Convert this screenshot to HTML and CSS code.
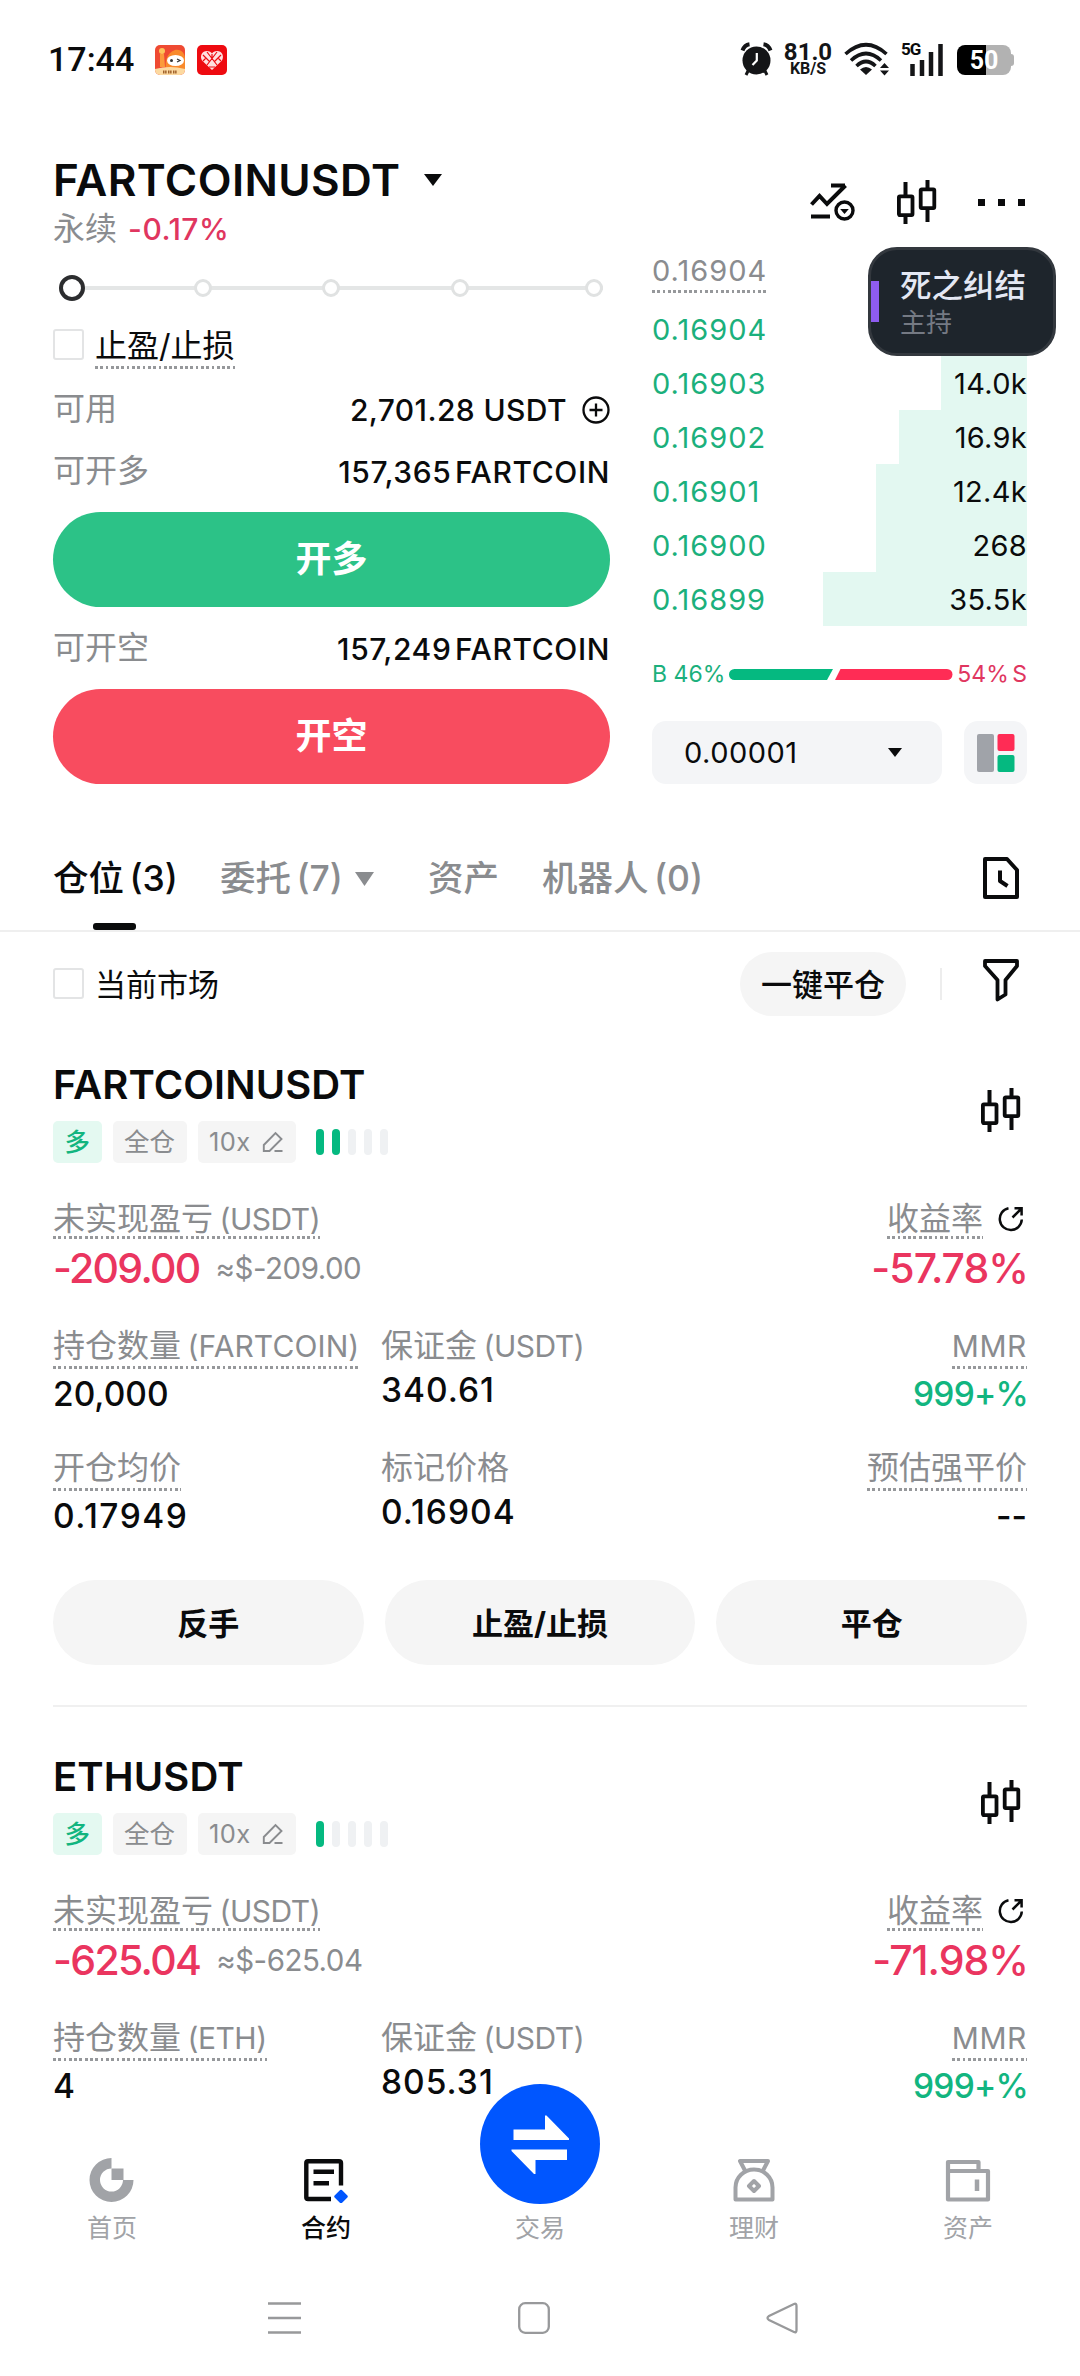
FILE: index.html
```html
<!DOCTYPE html>
<html lang="zh-CN">
<head>
<meta charset="utf-8">
<title>FARTCOINUSDT</title>
<link rel="stylesheet" href="styles.css">
</head>
<body>
<svg width="0" height="0" class="defs">
  <defs>
    <symbol id="candles" viewBox="0 0 40 44">
      <g fill="none" stroke="#0a0b0c">
        <path stroke-width="4" d="M8.500 2V15M8.500 36V44M30.500 0V9M30.500 29V42"/>
        <rect stroke-width="3.800" x="1.900" y="16.300" width="13.600" height="18.800" rx="1"/>
        <rect stroke-width="3.800" x="23.700" y="9.300" width="13.600" height="18.800" rx="1"/>
      </g>
    </symbol>
    <symbol id="share" viewBox="0 0 26 26">
      <path d="M10.500 2.200A11 11 0 1 0 23.800 13.500M14.500 11.500L23 3M16.500 2.300H23.600V9.500" fill="none" stroke="#0a0b0c" stroke-width="2.500"/>
    </symbol>
    <symbol id="edit" viewBox="0 0 22 22">
      <path d="M1.800 20V14L13.500 2L19.500 8L7.500 20ZM12.500 20H20.500" fill="none" stroke="#8a8c8f" stroke-width="1.900"/>
    </symbol>
  </defs>
</svg>

<div class="screen">
  <header class="status">
    <span class="clock">17:44</span>
    <svg class="app-a" width="30" height="30" viewBox="0 0 30 30">
      <rect width="30" height="30" rx="5" fill="#ef4a32"/>
      <path d="M12 30C9 18 11 8 20 5C27 4 30 9 30 14V25H12Z" fill="#f98a2c"/>
      <circle cx="7" cy="6" r="3" fill="#fdc45a"/><path d="M5 9H9L10 22H5Z" fill="#fb9a3a"/>
      <path d="M0 24Q15 20 30 24V25A5 5 0 0 1 25 30H5A5 5 0 0 1 0 25Z" fill="#fcd9a0"/>
      <ellipse cx="20.500" cy="15.500" rx="8.500" ry="5.500" fill="#fff"/>
      <circle cx="16.500" cy="15.500" r="1.500" fill="#333"/><path d="M22 14L25 15.500L22 17" fill="none" stroke="#333" stroke-width="1.200"/>
      <path d="M8 27H12M13 27H17M18 27H22" stroke="#a0622c" stroke-width="3" stroke-dasharray="1.500 .600"/>
    </svg>
    <svg class="app-b" width="30" height="30" viewBox="0 0 30 30">
      <rect width="30" height="30" rx="5" fill="#ee0a10"/>
      <path d="M15 25L5 15.500C2.500 11 5 6 10 6C12.500 6 14 7 15 8.500C16 7 17.500 6 20 6C25 6 27.500 11 25 15.500Z" fill="#ffdfe0"/>
      <path d="M6 10L13 17M10 7L20 20M24 10L17 17M20 7L10 20M15 9V13M9 13L6 16M21 13L24 16M12 22H18" stroke="#ee0a10" stroke-width="1.200"/>
    </svg>
    <svg class="alarm" width="33" height="34" viewBox="0 0 33 34">
      <circle cx="16.500" cy="18.500" r="14" fill="#141517"/>
      <path d="M2.500 8.500Q4.500 3 9.500 2.300M30.500 8.500Q28.500 3 23.500 2.300" fill="none" stroke="#141517" stroke-width="4"/>
      <path d="M8 29L6 33M25 29L27 33" stroke="#141517" stroke-width="3"/>
      <path d="M16.800 11V18.500L12.500 23" fill="none" stroke="#fff" stroke-width="2.200"/>
    </svg>
    <div class="speed"><b>81.0</b><i>KB/S</i></div>
    <svg class="wifi" width="46" height="34" viewBox="0 0 46 34">
      <g fill="none" stroke="#141517" stroke-width="3.600">
        <path d="M1.500 12Q22 -6.500 42.500 12"/><path d="M7 18.500Q22 4.500 37 18.500"/><path d="M12.500 24Q22 15 31.500 24"/>
      </g>
      <path d="M16 27.500Q22 22.500 28 27.500L22 33Z" fill="#141517"/>
      <path d="M36 26L40.500 21L45 26ZM36 28.500H45L40.500 33.500Z" fill="#141517"/>
    </svg>
    <div class="signal"><span>5G</span>
      <svg width="35" height="34" viewBox="0 0 35 34"><path d="M3.500 22V34M13 18V34M22 10V34M31.500 2V34" stroke="#141517" stroke-width="4.500"/></svg>
    </div>
    <div class="battery"><span>50</span></div>
  </header>

  <section class="pair">
    <div>
      <h1>FARTCOINUSDT<svg width="18" height="12" viewBox="0 0 18 12"><path d="M0 0H18L9 12Z" fill="#0a0b0c"/></svg></h1>
      <p><span>永续</span><b>-0.17%</b></p>
    </div>
    <div class="tools">
      <svg width="46" height="38" viewBox="0 0 46 38">
        <path d="M1.500 21.500L9.500 13L17 21L35.500 2.500M21 2.500H35M1 33.500H20" fill="none" stroke="#0a0b0c" stroke-width="4"/>
        <circle cx="34.500" cy="27.500" r="8.500" fill="#fff" stroke="#0a0b0c" stroke-width="3.400"/>
        <path d="M30.200 26H38.800L34.500 31Z" fill="#0a0b0c"/>
      </svg>
      <svg width="40" height="44"><use href="#candles"/></svg>
      <svg width="47" height="7" viewBox="0 0 47 7"><path d="M0 0H7V7H0ZM20 0H27V7H20ZM40 0H47V7H40Z" fill="#0a0b0c"/></svg>
    </div>
  </section>

  <section class="trade">
    <div class="order">
      <div class="slider"><i class="on"></i><i></i><i></i><i></i><i></i></div>
      <div class="tpsl"><i class="check"></i><span class="dotted">止盈/止损</span></div>
      <div class="kv r1"><span>可用</span><b class="avail">2,701.28 USDT</b>
        <svg width="28" height="28" viewBox="0 0 28 28"><circle cx="14" cy="14" r="12.500" fill="none" stroke="#0a0b0c" stroke-width="2.300"/><path d="M14 7.500V20.500M7.500 14H20.500" stroke="#0a0b0c" stroke-width="2.300"/></svg>
      </div>
      <div class="kv r2"><span>可开多</span><b class="coin">157,365 FARTCOIN</b></div>
      <button class="cta long">开多</button>
      <div class="kv r2"><span>可开空</span><b class="coin">157,249 FARTCOIN</b></div>
      <button class="cta short">开空</button>
    </div>
    <div class="book">
      <div class="mark"><span class="dotted">0.16904</span></div>
      <div class="bid"><span>0.16904</span></div>
      <div class="bid"><span>0.16903</span><b style="width:86px">14.0k</b></div>
      <div class="bid"><span>0.16902</span><b style="width:128px">16.9k</b></div>
      <div class="bid"><span>0.16901</span><b style="width:151px">12.4k</b></div>
      <div class="bid"><span>0.16900</span><b style="width:151px">268</b></div>
      <div class="bid"><span>0.16899</span><b style="width:204px">35.5k</b></div>
      <div class="ratio">
        <span class="up">B 46%</span>
        <svg width="224" height="11" viewBox="0 0 224 11"><path d="M5.500 0H104L98 11H5.500A5.500 5.500 0 0 1 5.500 0Z" fill="#05b980"/><path d="M111.500 0H218A5.500 5.500 0 0 1 218 11H106Z" fill="#ff2c55"/></svg>
        <span class="down">54% S</span>
      </div>
      <div class="depth">
        <div class="step">0.00001<svg width="14" height="9" viewBox="0 0 14 9"><path d="M0 0H14L7 9Z" fill="#0a0b0c"/></svg></div>
        <div class="mode"><svg width="38" height="38" viewBox="0 0 38 38"><rect width="17" height="38" rx="2" fill="#a0a3a9"/><rect x="20.500" width="17" height="17" rx="2" fill="#ff2c55"/><rect x="20.500" y="21" width="17" height="17" rx="2" fill="#05b980"/></svg></div>
      </div>
      <div class="host"><b>死之纠结</b><span>主持</span></div>
    </div>
  </section>

  <nav class="tabs">
    <span class="tab active">仓位 (3)</span>
    <span class="tab t2">委托 (7)<svg width="19" height="14" viewBox="0 0 19 14"><path d="M0 0H19L9.500 14Z" fill="#8a8c8f"/></svg></span>
    <span class="tab t3">资产</span>
    <span class="tab t4">机器人 (0)</span>
    <svg class="history" width="36" height="42" viewBox="0 0 36 42"><path d="M2 2H24L34 13V40H2ZM17 13.500V24L24.500 29" fill="none" stroke="#0a0b0c" stroke-width="4" stroke-linejoin="round"/></svg>
  </nav>

  <div class="filter">
    <i class="check"></i><span>当前市场</span>
    <button>一键平仓</button><i class="sep"></i>
    <svg width="36" height="43" viewBox="0 0 36 43"><path d="M2 2H34V7L22.500 21V35.500L14.500 40.500V21L2 7Z" fill="none" stroke="#0a0b0c" stroke-width="3.800" stroke-linejoin="round"/></svg>
  </div>

  <article class="card first">
    <div class="head">
      <div>
        <h2>FARTCOINUSDT</h2>
        <div class="tags"><span class="side">多</span><span>全仓</span><span class="lev">10x<svg width="22" height="22"><use href="#edit"/></svg></span>
          <div class="risk"><i class="on"></i><i class="on"></i><i></i><i></i><i></i></div></div>
      </div>
      <svg width="40" height="44"><use href="#candles"/></svg>
    </div>
    <div class="pnl">
      <div><span class="label dotted">未实现盈亏 <em>(USDT)</em></span>
        <div class="big"><b>-209.00</b><small>≈$-209.00</small></div></div>
      <div class="right"><div class="roi"><span class="label dotted">收益率</span><svg width="26" height="26"><use href="#share"/></svg></div>
        <div class="big rate"><b>-57.78%</b></div></div>
    </div>
    <div class="stats">
      <div><span class="label dotted">持仓数量 <em class="fc">(FARTCOIN)</em></span><b>20,000</b></div>
      <div><span class="label">保证金 <em>(USDT)</em></span><b class="wide">340.61</b></div>
      <div class="right"><span class="label dotted"><em class="mmr">MMR</em></span><b class="green">999+%</b></div>
    </div>
    <div class="stats">
      <div><span class="label dotted">开仓均价</span><b class="wider">0.17949</b></div>
      <div><span class="label">标记价格</span><b class="wide">0.16904</b></div>
      <div class="right"><span class="label dotted">预估强平价</span><b>--</b></div>
    </div>
    <div class="actions"><button>反手</button><button>止盈/止损</button><button>平仓</button></div>
  </article>

  <article class="card">
    <div class="head">
      <div>
        <h2>ETHUSDT</h2>
        <div class="tags"><span class="side">多</span><span>全仓</span><span class="lev">10x<svg width="22" height="22"><use href="#edit"/></svg></span>
          <div class="risk"><i class="on"></i><i></i><i></i><i></i><i></i></div></div>
      </div>
      <svg width="40" height="44"><use href="#candles"/></svg>
    </div>
    <div class="pnl">
      <div><span class="label dotted">未实现盈亏 <em>(USDT)</em></span>
        <div class="big"><b>-625.04</b><small>≈$-625.04</small></div></div>
      <div class="right"><div class="roi"><span class="label dotted">收益率</span><svg width="26" height="26"><use href="#share"/></svg></div>
        <div class="big rate"><b>-71.98%</b></div></div>
    </div>
    <div class="stats">
      <div><span class="label dotted">持仓数量 <em>(ETH)</em></span><b>4</b></div>
      <div><span class="label">保证金 <em>(USDT)</em></span><b class="wide">805.31</b></div>
      <div class="right"><span class="label dotted"><em class="mmr">MMR</em></span><b class="green">999+%</b></div>
    </div>
  </article>

  <nav class="bottom">
    <a><svg width="46" height="46" viewBox="0 0 46 46"><path d="M22.500 1V11.500A11.500 11.500 0 1 0 34 23H44.500A22 22 0 1 1 22.500 1Z" fill="#a1a3a7"/><path d="M22.500 11.500H34.500V23H22.500Z" fill="#a1a3a7"/></svg><span>首页</span></a>
    <a class="active"><svg width="46" height="46" viewBox="0 0 46 46"><path d="M28 42H5Q3.300 42 3.300 40.500V6Q3.300 4.200 5 4.200H36Q38 4.200 38 6V28.500M10.500 14.700H31M10.500 26.300H26" fill="none" stroke="#0a0b0c" stroke-width="4.400"/><path d="M38 34L43.500 39.500L38 45L32.500 39.500Z" fill="#0056ff" stroke="#0056ff" stroke-width="2.500" stroke-linejoin="round"/></svg><span>合约</span></a>
    <a class="mid"><svg width="120" height="120" viewBox="0 0 120 120"><circle cx="60" cy="60" r="60" fill="#0056ff"/><path d="M33.500 45.500H65V31.500H66.500L89 54.500V56H33.500ZM87 65.500H31.500V67L54 90H55.500V76H87Z" fill="#fff"/></svg><span>交易</span></a>
    <a><svg width="46" height="46" viewBox="0 0 46 46"><path d="M14 13.500L9 4H37L32 13.500M4.500 42.500V30.500A18.500 18 0 0 1 41.500 30.500V42.500ZM23 24L28 29L23 34L18 29Z" fill="none" stroke="#a1a3a7" stroke-width="4" stroke-linejoin="round"/></svg><span>理财</span></a>
    <a><svg width="46" height="46" viewBox="0 0 46 46"><path d="M3 14V5H33.500V14M3 14H43V42.500H3Z" fill="none" stroke="#a1a3a7" stroke-width="4.200" stroke-linejoin="round"/><path d="M32 22.500V34" stroke="#a1a3a7" stroke-width="4.500"/></svg><span>资产</span></a>
  </nav>

  <footer class="system">
    <svg width="33" height="32" viewBox="0 0 33 32"><path d="M0 1.500H33M0 16H33M0 30.500H33" stroke="#98999b" stroke-width="2.500"/></svg>
    <svg width="32" height="32" viewBox="0 0 32 32"><rect x="1.200" y="1.200" width="29.600" height="29.600" rx="6" fill="none" stroke="#98999b" stroke-width="2.300"/></svg>
    <svg width="32" height="32" viewBox="0 0 32 32"><path d="M28 2Q30.500 1 30.500 4V28Q30.500 31 28 30L3 18Q0 16 3 14Z" fill="none" stroke="#98999b" stroke-width="2.300"/></svg>
  </footer>
</div>
</body>
</html>
```
FILE: styles.css
```css
* { box-sizing: border-box; margin: 0; padding: 0; }
body { background: #fff; }
.defs { position: absolute; }
i, em { font-style: normal; }
svg { display: block; flex: none; }
button { border: 0; font: inherit; color: inherit; }

.screen {
  width: 1080px; height: 2376px; overflow: hidden;
  display: flex; flex-direction: column;
  background: #fff; color: #0a0b0c;
  font-family: Inter, "Noto Sans CJK SC", sans-serif;
  font-size: 32px; white-space: nowrap;
}

/* status bar */
.status { height: 118px; padding: 0 66px 0 48px; display: flex; align-items: center; flex: none; }
.clock { font: 500 34px/40px Roboto, sans-serif; width: 107px; }
.app-a { margin: 2px 12px 0 0; }
.app-b { margin-top: 2px; }
.alarm { margin-left: auto; }
.speed { width: 48px; margin-left: 11px; display: flex; flex-direction: column; align-items: center; color: #141517; }
.speed b { font: 700 24px/18px Roboto, sans-serif; }
.speed i { font: 700 16px/15px Roboto, sans-serif; }
.wifi { margin-left: 12px; }
.signal { width: 43px; height: 34px; margin-left: 11px; display: flex; justify-content: flex-end; position: relative; }
.signal span { position: absolute; left: 0; top: 0; font: 700 17px/14px Roboto, sans-serif; letter-spacing: -1px; }
.battery { width: 54px; height: 30px; margin: 1px 3px 0 13px; border-radius: 8px; background: linear-gradient(90deg, #000 54%, #b2b2b2 54%); position: relative; text-align: center; }
.battery::after { content: ""; position: absolute; right: -3px; top: 9px; width: 4px; height: 12px; border-radius: 0 3px 3px 0; background: #b2b2b2; }
.battery span { display: block; font: 700 25px/31px Roboto, sans-serif; color: #fff; }

/* pair header */
.pair { height: 128px; padding: 32px 55px 0 53px; display: flex; justify-content: space-between; flex: none; }
.pair h1 { font-size: 44px; line-height: 60px; font-weight: 600; display: flex; align-items: center; gap: 24px; letter-spacing: .4px; }
.pair p { line-height: 38px; display: flex; gap: 11px; color: #8a8c8f; }
.pair p b { font-size: 30px; font-weight: 500; color: #e0365f; letter-spacing: .5px; }
.tools { height: 104px; display: flex; align-items: center; gap: 41px; }

/* order form and book */
.trade { display: flex; padding: 0 53px; gap: 42px; height: 538px; flex: none; }
.order { width: 557px; padding-top: 29px; }
.slider { margin: 0 7px 0 6px; height: 26px; display: grid; grid-template-columns: 135px 128px 129px 134px 18px; align-items: center; background: linear-gradient(#e4e6e6, #e4e6e6) 0 50% / 100% 4px no-repeat; }
.slider i { width: 18px; height: 18px; border: 3px solid #e0e2e2; border-radius: 50%; background: #fff; }
.slider .on { width: 26px; height: 26px; border: 4px solid #2c2d2f; }
.check { width: 31px; height: 31px; border: 2px solid #e3e4e5; border-radius: 3px; flex: none; }
.dotted { background: repeating-linear-gradient(90deg, #96989b 0 2.700px, transparent 2.700px 5.300px) 0 100% / 100% 3px no-repeat; }
.tpsl { margin-top: 18px; height: 50px; display: flex; align-items: center; gap: 11px; }
.tpsl .dotted { height: 50px; line-height: 54px; }
.kv { height: 40px; line-height: 40px; display: flex; align-items: center; justify-content: space-between; }
.kv span { color: #8a8c8f; margin-top: -2px; }
.kv b { font-size: 30px; font-weight: 500; }
.avail { letter-spacing: .4px; }
.coin { letter-spacing: .6px; word-spacing: -5px; }
.r1 { margin-top: 21px; }
.r1 b { margin-left: auto; margin-right: 15px; }
.r2 { margin-top: 22px; }
.cta { display: block; width: 100%; height: 95px; border-radius: 48px; color: #fff; font-size: 36px; font-weight: 700; line-height: 95px; }
.long { margin-top: 20px; background: #2cc287; }
.short { margin-top: 20px; background: #f84c5f; }

.book { width: 375px; position: relative; font-size: 29px; }
.mark { padding-top: 4px; height: 56px; color: #8a8c8f; display: flex; }
.mark span { height: 43px; line-height: 41px; letter-spacing: 1px; }
.bid { height: 54px; line-height: 56px; display: flex; justify-content: space-between; color: #1bb07c; letter-spacing: 1px; }
.bid b { font-weight: 400; color: #0a0b0c; background: #e3f8f1; display: block; text-align: right; letter-spacing: .3px; }
.ratio { margin-top: 33px; height: 30px; display: flex; align-items: center; justify-content: space-between; font-size: 23px; }
.up { color: #1bb07c; }
.down { color: #e0365f; word-spacing: -3px; }
.depth { margin-top: 32px; height: 63px; display: flex; justify-content: space-between; }
.step { width: 290px; padding: 0 40px 0 32px; border-radius: 14px; background: #f4f5f7; display: flex; align-items: center; justify-content: space-between; letter-spacing: .5px; }
.mode { width: 63px; border-radius: 14px; background: #f4f5f7; display: grid; place-items: center; }
.host { position: absolute; left: 216px; top: 1px; width: 188px; height: 109px; padding: 17px 0 0 29px; border: 3px solid #33383e; border-radius: 29px; background: linear-gradient(#8e5cf0, #8e5cf0) 0 31px / 8px 41px no-repeat, #1e252c; color: #e4e8f4; }
.host b { display: block; font-size: 31.500px; line-height: 37px; font-weight: 500; }
.host span { display: block; font-size: 26px; line-height: 38px; color: #757a84; }

/* tabs */
.tabs { margin-top: 49px; height: 99px; flex: none; border-bottom: 2px solid #efefef; padding: 0 61px 0 53px; display: flex; font-size: 35.500px; font-weight: 500; line-height: 92px; color: #8a8c8f; word-spacing: -4px; }
.tab { position: relative; width: 167px; display: flex; align-items: center; height: 92px; gap: 12px; }
.t2 { width: 208px; }
.t3 { width: 114px; }
.active { color: #0a0b0c; }
.tab.active::after { content: ""; position: absolute; left: 40px; top: 90px; width: 43px; height: 7px; border-radius: 3px; background: #0a0b0c; }
.history { margin: 24px 0 0 auto; }

.filter { height: 103px; flex: none; padding: 0 61px 0 53px; display: flex; align-items: center; font-size: 31px; }
.filter > span { margin: -3px 0 0 11px; }
.filter button { margin-left: auto; width: 166px; height: 64px; padding-bottom: 3px; border-radius: 32px; background: #f5f5f5; font-weight: 500; }
.sep { width: 2px; height: 32px; margin: 0 41px 0 34px; background: #ededed; }
.filter svg { margin-bottom: 7px; }

/* position cards */
.card { padding: 48px 53px 0; flex: none; }
.card.first { padding-top: 28px; }
.head { display: flex; justify-content: space-between; align-items: center; height: 100px; padding-right: 6px; }
.head > svg { margin-top: -6px; }
.head h2 { font-size: 40px; line-height: 44px; font-weight: 600; letter-spacing: .1px; }
.tags { margin-top: 14px; height: 42px; display: flex; gap: 11px; font-size: 25.500px; line-height: 42px; color: #8a8c8f; }
.tags > span { padding: 0 11.500px; border-radius: 5px; background: #f5f5f5; }
.tags .side { color: #12b57f; background: #e4f9f1; font-weight: 500; }
.tags .lev { width: 98px; display: flex; align-items: center; justify-content: space-between; letter-spacing: .4px; }
.risk { display: flex; align-items: center; gap: 8px; margin-left: 9px; }
.risk i { width: 8px; height: 26px; border-radius: 4px; background: #eff1f3; }
.risk .on { background: #05b980; }
.pnl { margin-top: 35px; display: flex; justify-content: space-between; }
.label { color: #8a8c8f; font-size: 32px; font-weight: 400; line-height: 40px; height: 39px; width: max-content; display: block; word-spacing: -2.500px; }
.label.dotted { height: 43px; }
.label em { font-size: 30px; letter-spacing: -.5px; }
.label .fc { letter-spacing: .1px; }
.label .mmr { letter-spacing: .6px; }
.pnl .label.dotted { height: 41px; line-height: 41px; }
.right { display: flex; flex-direction: column; align-items: flex-end; }
.roi { display: flex; align-items: center; gap: 15px; padding-right: 3px; }
.big { height: 58px; display: flex; align-items: center; gap: 16px; color: #ea355f; }
.big b { font-size: 41px; font-weight: 500; letter-spacing: -1.700px; }
.big small { font-size: 29.500px; color: #8a8c8f; letter-spacing: -.5px; }
.rate b { letter-spacing: -1px; margin-right: -1px; }
.stats { margin-top: 29px; display: grid; grid-template-columns: 328px 1fr 1fr; }
.stats b { display: block; font-size: 33.500px; line-height: 50px; font-weight: 500; }
.stats .wide { letter-spacing: 1px; }
.stats .wider { letter-spacing: 1.500px; }
.stats .green { color: #12b57f; letter-spacing: -.8px; margin-right: -1px; }
.actions { margin-top: 39px; padding-bottom: 40px; border-bottom: 2px solid #f0f0f0; display: grid; grid-template-columns: repeat(3, 1fr); gap: 21px; }
.actions button { height: 85px; padding-bottom: 3px; border-radius: 43px; background: #f5f5f5; font-size: 31px; font-weight: 700; }

/* bottom navigation */
.bottom { height: 149px; flex: none; padding: 0 5px; display: grid; grid-template-columns: repeat(5, 1fr); font-size: 25px; color: #a1a3a7; }
.bottom a { display: flex; flex-direction: column; align-items: center; padding-top: 46px; }
.bottom span { line-height: 36px; margin-top: 7px; }
.bottom .active { color: #0a0b0c; }
.bottom .active span { font-weight: 500; }
.bottom .mid { padding-top: 0; }
.mid svg { margin-top: -27px; position: relative; }
.bottom .mid span { margin-top: 6px; }
.system { height: 116px; flex: none; padding: 0 282px 0 268px; display: flex; align-items: center; justify-content: space-between; }
```
